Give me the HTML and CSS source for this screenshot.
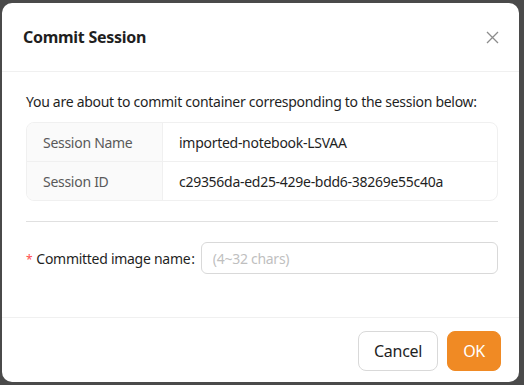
FILE: index.html
```html
<!DOCTYPE html>
<html lang="en">
<head>
  <meta charset="UTF-8">
  <meta name="viewport" content="width=device-width, initial-scale=1.0">
  <title>Commit Session</title>
  <link rel="stylesheet" href="styles.css">
</head>
<body>
  <div class="backdrop">
    <div class="modal">
      <div class="modal-header">
        <h1 class="title">Commit Session</h1>
        <button class="close-button" aria-label="Close">
          <svg width="13" height="13" viewBox="0 0 13 13">
            <path d="M1 1L12 12M12 1L1 12" stroke="#8c8c8c" stroke-width="1.3" fill="none"/>
          </svg>
        </button>
      </div>

      <div class="modal-body">
        <p class="intro">You are about to commit container corresponding to the session below:</p>

        <div class="info-table">
          <div class="info-label">Session Name</div>
          <div class="info-value">imported-notebook-LSVAA</div>
          <div class="info-label">Session ID</div>
          <div class="info-value">c29356da-ed25-429e-bdd6-38269e55c40a</div>
        </div>

        <hr class="divider">

        <form class="form-row" action="/">
          <label for="imageName" class="form-label"><span class="required">*</span>Committed image name<span class="colon">:</span></label>
          <input type="text" id="imageName" class="text-input" placeholder="(4~32 chars)">
        </form>
      </div>

      <div class="modal-footer">
        <button class="button">Cancel</button>
        <button class="button primary-button">OK</button>
      </div>
    </div>
  </div>
</body>
</html>
```

FILE: styles.css
```css
:root {
  --white: #FFFFFF;
  --text: #1f1f1f;
  --muted: #595959;
  --placeholder: #bfbfbf;
  --border: #f0f0f0;
  --input-border: #d9d9d9;
  --label-bg: #fafafa;
  --orange: #F08A24;
  --backdrop: #4a4a4a;
}
body {
  margin: 0;
  font-family: 'Noto Sans', sans-serif;
  color: var(--text);
  letter-spacing: -0.28px;
}
.backdrop {
  width: 524px;
  height: 385px;
  background-color: var(--backdrop);
  padding: 3px 5px 3px 2px;
  box-sizing: border-box;
}
.modal {
  background-color: var(--white);
  border-radius: 10px;
  height: 379px;
  display: flex;
  flex-direction: column;
}
.modal-header {
  display: flex;
  align-items: center;
  justify-content: space-between;
  height: 68px;
  padding: 0 16px 0 21px;
  border-bottom: 1px solid var(--border);
}
.title {
  margin: 0;
  font-size: 16px;
  font-weight: 700;
}
.close-button {
  border: none;
  background: none;
  padding: 4px;
  display: flex;
  cursor: pointer;
}
.modal-body {
  flex: 1;
  padding: 19px 21px 0 24px;
}
.intro {
  margin: 0 0 9px 0;
  font-size: 14px;
  line-height: 22px;
}
.info-table {
  display: grid;
  grid-template-columns: 136px 1fr;
  border: 1px solid var(--border);
  border-radius: 8px;
  overflow: hidden;
  font-size: 14px;
}
.info-label,
.info-value {
  height: 38px;
  display: flex;
  align-items: center;
  padding: 0 16px;
}
.info-label {
  background-color: var(--label-bg);
  color: var(--muted);
  border-right: 1px solid var(--border);
}
.info-label:nth-child(1),
.info-value:nth-child(2) {
  border-bottom: 1px solid var(--border);
}
.divider {
  border: none;
  border-top: 1px solid #e0e0e0;
  margin: 20px 0 20px 0;
}
.form-row {
  display: flex;
  align-items: center;
  gap: 6px;
}
.form-label {
  font-size: 14px;
  white-space: nowrap;
}
.required {
  color: #ff4d4f;
  margin-right: 4px;
  font-size: 12px;
}
.colon {
  margin-left: 1px;
}
.text-input {
  flex: 1;
  height: 32px;
  box-sizing: border-box;
  border: 1px solid var(--input-border);
  border-radius: 6px;
  padding: 0 11px;
  font-family: inherit;
  font-size: 14px;
  letter-spacing: -0.28px;
}
.text-input::placeholder {
  color: var(--placeholder);
}
.modal-footer {
  display: flex;
  justify-content: flex-end;
  gap: 9px;
  padding: 13px 18px 11px 0;
  border-top: 1px solid var(--border);
}
.button {
  height: 40px;
  padding: 0 15px;
  border-radius: 8px;
  border: 1px solid var(--input-border);
  background-color: var(--white);
  font-family: inherit;
  font-size: 16px;
  letter-spacing: -0.28px;
  color: var(--text);
  cursor: pointer;
}
.primary-button {
  background-color: var(--orange);
  border-color: var(--orange);
  color: var(--white);
}
```
